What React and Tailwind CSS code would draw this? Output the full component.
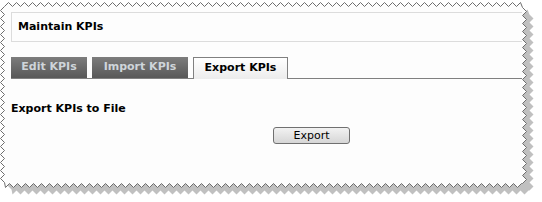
import React from "react";

// torn-edge outline, built as a zigzag polygon
function tornPath(dx = 0, dy = 0) {
  const pts = [];
  let i = 0;
  for (let x = 4; x <= 522; x += 4, i++) pts.push([x, i % 2 ? 2 : 6]);
  i = 0;
  for (let y = 7; y <= 183; y += 4, i++) pts.push([i % 2 ? 526 : 522, y]);
  i = 0;
  for (let x = 521; x >= 4; x -= 4, i++) pts.push([x, i % 2 ? 187 : 183]);
  i = 0;
  for (let y = 182; y >= 7; y -= 4, i++) pts.push([i % 2 ? 0 : 4, y]);
  return pts.map(([x, y]) => `${x + dx + 0.5},${y + dy + 0.5}`).join(" ");
}

function TornFrame() {
  return (
    <svg className="absolute inset-0" width="542" height="202">
      <polygon points={tornPath(7, 7)} fill="#c0c0c0" />
      <polygon points={tornPath()} fill="#fdfdfd" stroke="#6e6e6e" strokeWidth="1" />
    </svg>
  );
}

const tabs = [
  { label: "Edit KPIs", w: "w-[76px]" },
  { label: "Import KPIs", w: "w-[96px]" },
  { label: "Export KPIs", w: "w-[95px]" },
];

export default function App() {
  const active = "Export KPIs";
  return (
    <div
      className="relative w-[542px] h-[202px] bg-white overflow-hidden"
      style={{ fontFamily: "'DejaVu Sans', Verdana, sans-serif" }}
    >
      <TornFrame />
      <div className="relative pl-[11px] pt-[12px] w-[522px]">
        <div className="h-[30px] border border-r-0 border-[#dcdcdc] flex items-center pl-[6px]">
          <span className="text-[11px] font-bold text-black">Maintain KPIs</span>
        </div>
        <div className="mt-[15px] flex gap-[5px] items-end border-b border-[#808080] h-[22px]">
          {tabs.map((t) =>
            t.label === active ? (
              <div
                key={t.label}
                className={`${t.w} h-[22px] -mb-px flex items-center justify-center border border-b-0 border-[#808080] bg-gradient-to-b from-[#ffffff] to-[#ececec] text-[11px] font-bold text-black`}
              >
                {t.label}
              </div>
            ) : (
              <div
                key={t.label}
                className={`${t.w} h-[21px] flex items-center justify-center bg-gradient-to-b from-[#7d7d7d] to-[#585858] text-[11px] font-bold text-[#cfd5da]`}
              >
                {t.label}
              </div>
            )
          )}
        </div>
        <div className="mt-[23px] text-[11px] font-bold text-black leading-[14px]">Export KPIs to File</div>
        <div className="mt-[6px] pl-[262px]">
          <button
            className="w-[77px] h-[17px] rounded-[3px] border border-[#707070] bg-gradient-to-b from-[#f2f2f2] to-[#d6d6d6] text-[11px] text-black leading-none"
            style={{ fontFamily: "'DejaVu Sans', Tahoma, sans-serif" }}
          >
            Export
          </button>
        </div>
      </div>
    </div>
  );
}
